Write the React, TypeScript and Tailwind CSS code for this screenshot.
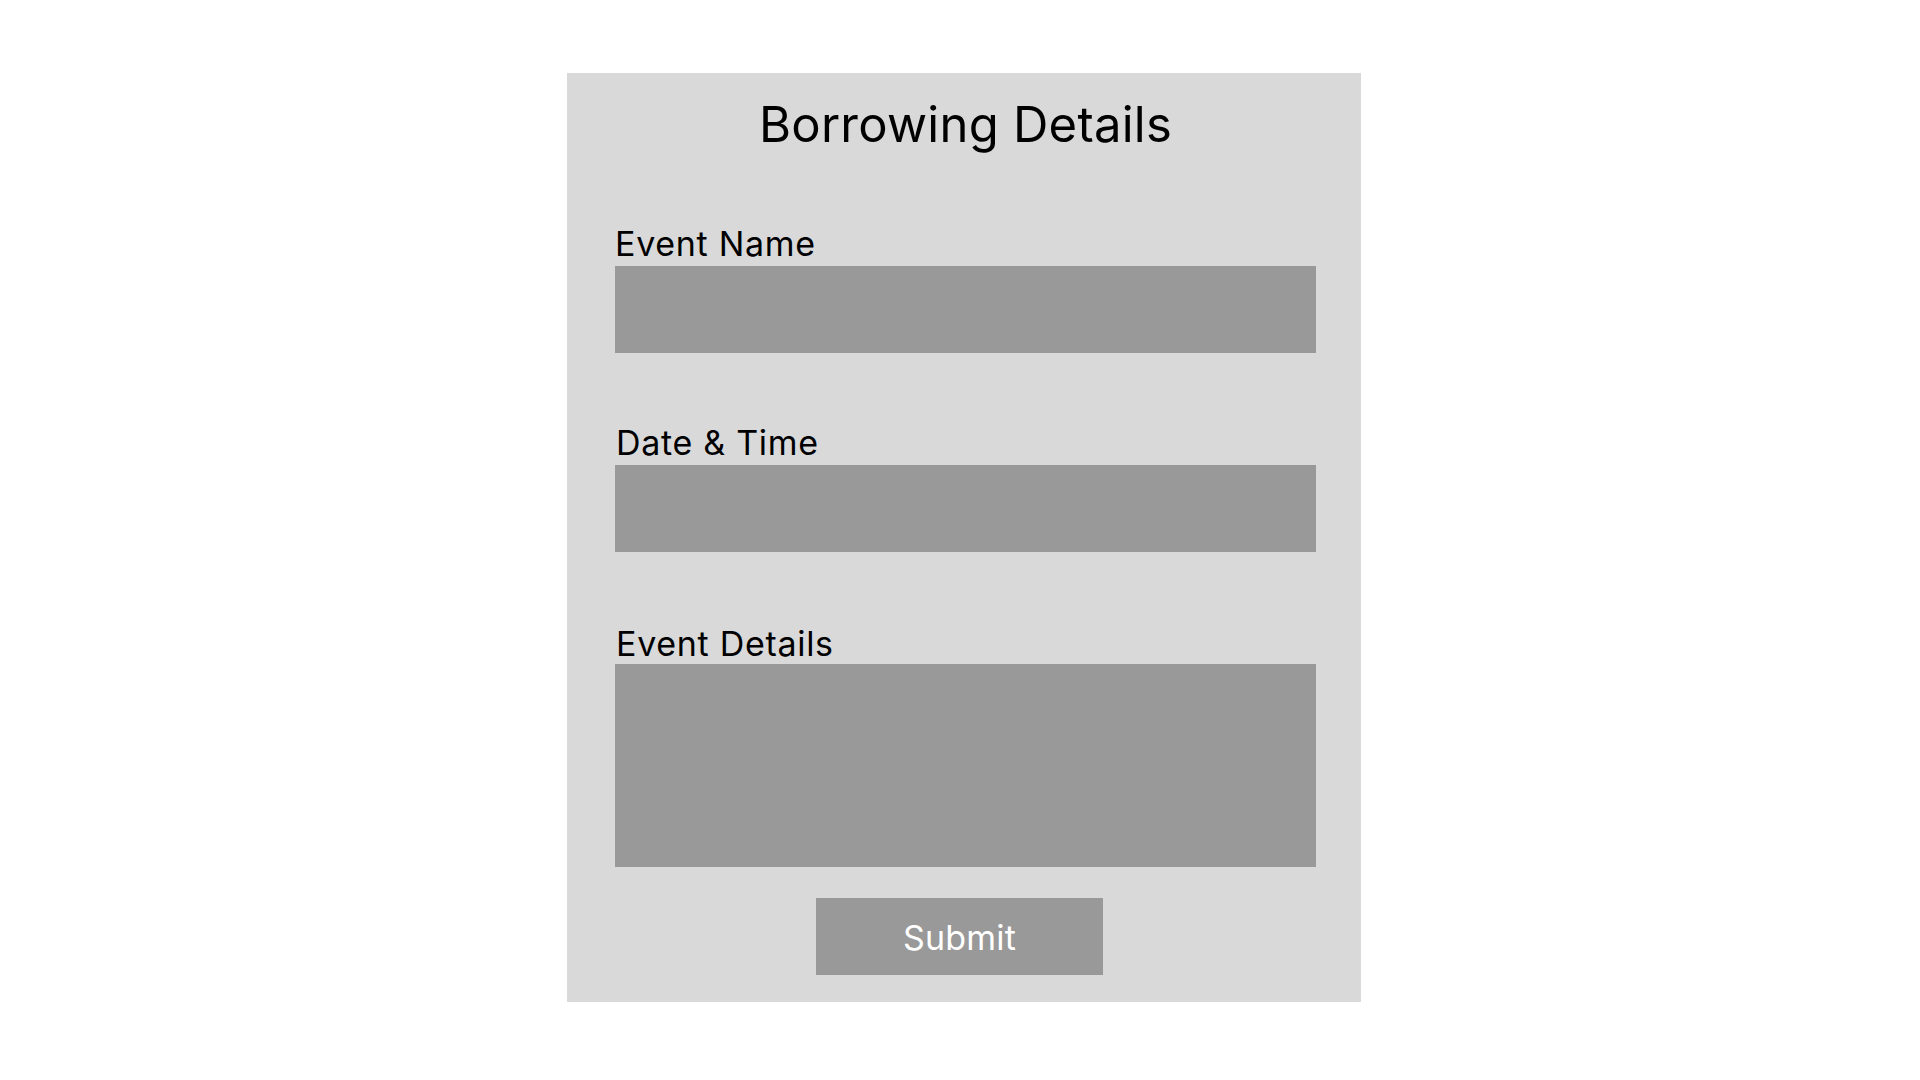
const fields = [
  { label: 'Event Name', height: 'h-[87px]', gap: 'mt-[78px]', inputGap: 'mt-[5px]', indent: '' },
  { label: 'Date & Time', height: 'h-[87px]', gap: 'mt-[73px]', inputGap: 'mt-[5px]', indent: 'pl-[1px]' },
  { label: 'Event Details', height: 'h-[203px]', gap: 'mt-[75px]', inputGap: 'mt-[3px]', indent: 'pl-[1px]' },
];

export default function App() {
  return (
    <div className="min-h-screen w-full bg-white font-['Inter',sans-serif] text-black">
      <div className="pt-[73px] pl-[567px]">
        <div className="flex h-[929px] w-[794px] flex-col bg-[#d9d9d9] pt-[27px] pl-[48px]">
          <h1 className="w-[701px] text-center text-[49px] font-normal leading-none tracking-[0.25px]">
            Borrowing Details
          </h1>

          {fields.map((field) => (
            <div key={field.label} className={`flex flex-col ${field.gap}`}>
              <label className={`text-[34px] leading-none tracking-[0.7px] ${field.indent}`}>
                {field.label}
              </label>
              <div className={`${field.inputGap} ${field.height} w-[701px] bg-[#999999]`} />
            </div>
          ))}

          <button
            type="button"
            className="mt-[31px] ml-[201px] flex h-[77px] w-[287px] items-center justify-center bg-[#999999] pt-[2px] text-[34px] leading-none tracking-[0.2px] text-white"
          >
            Submit
          </button>
        </div>
      </div>
    </div>
  );
}
